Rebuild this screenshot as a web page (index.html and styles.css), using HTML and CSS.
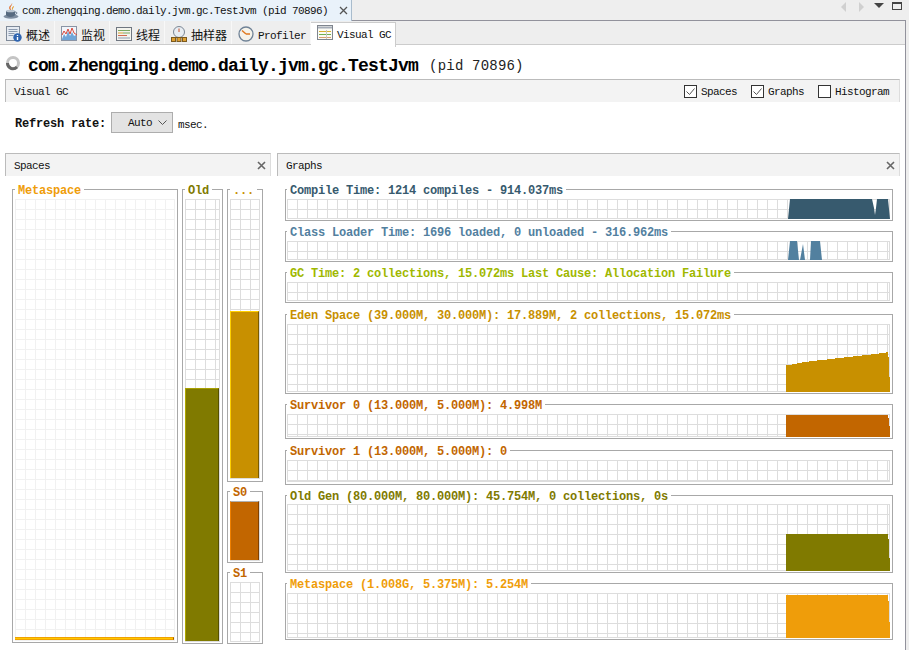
FILE: index.html
```html
<!DOCTYPE html>
<html lang="zh-CN">
<head>
    <meta charset="UTF-8">
    <title>VisualVM - Visual GC</title>
    <link rel="stylesheet" href="styles.css">
</head>
<body>

<div class="doc-bar">
    <div class="doc-tab">
        <svg class="doc-icon" width="16" height="16" viewBox="0 0 16 16">
            <path d="M9 0c1 2-2 3-1.500 5.500.2 1 1 1.500 1 2.500-1.500-1-3-2.500-2-4.500C7 2.500 9 2 9 0z" fill="#e0641c"/>
            <path d="M11 3c0 2-2 2-1 5-1.500-1-1.500-3.500 0-4.500z" fill="#e8a030"/>
            <ellipse cx="8" cy="13.500" rx="7.500" ry="2.200" fill="#7d8da0"/>
            <path d="M3 8h9v3.500c0 1.500-2 2.500-4.500 2.500S3 13 3 11.500z" fill="#566a80"/>
            <ellipse cx="7.500" cy="8" rx="4.500" ry="1.300" fill="#b8c4d0"/>
            <path d="M12 9c2.500-.5 2.500 2.500-.5 2.500" fill="none" stroke="#566a80"/>
        </svg>
        <span class="doc-name">com.zhengqing.demo.daily.jvm.gc.TestJvm (pid 70896)</span>
        <svg class="doc-close" width="9" height="9" viewBox="0 0 9 9"><path d="M1 1l7 7M8 1l-7 7" stroke="#555" stroke-width="1.300"/></svg>
    </div>
    <svg class="doc-nav" width="64" height="12" viewBox="0 0 64 12">
        <path d="M6 1v10L1 6z" fill="#d0d0d0"/>
        <path d="M19 1v10l5-5z" fill="#d0d0d0"/>
        <path d="M34 2h10l-5 5z" fill="#444"/>
        <rect x="52.500" y="1.500" width="9" height="7" fill="none" stroke="#444"/>
        <path d="M52 2h10" stroke="#444" stroke-width="2"/>
    </svg>
</div>

<div class="window">
    <div class="view-tabs">
        <div class="view-tab">
            <svg width="16" height="16" viewBox="0 0 16 16">
                <rect x=".5" y=".5" width="13" height="14" fill="#e6ebf2" stroke="#7f8a99"/>
                <path d="M2.500 3.500h9M2.500 5.500h9M2.500 7.500h6M2.500 9.500h5" stroke="#8c9bb0"/>
                <circle cx="11.500" cy="11.500" r="4.200" fill="#2f64b0"/>
                <path d="M11.500 9v1M11.500 11v3" stroke="#fff" stroke-width="1.400"/>
            </svg>
            <span class="tab-cjk">概述</span>
        </div>
        <div class="view-tab">
            <svg width="16" height="16" viewBox="0 0 16 16">
                <rect x=".5" y=".5" width="15" height="14" fill="#f2f5fa" stroke="#8a94a5"/>
                <path d="M1 13l2-5 2 3 2-6 2 5 2-4 2 4 2-1v5H1z" fill="#6fa5d8"/>
                <path d="M1 9l2-4 2 3 2-5 2 5 2-6 2 5 3 2" fill="none" stroke="#d8483c"/>
            </svg>
            <span class="tab-cjk">监视</span>
        </div>
        <div class="view-tab">
            <svg width="16" height="16" viewBox="0 0 16 16">
                <rect x=".5" y="1.500" width="15" height="13" fill="#f4f4ee" stroke="#6f7680"/>
                <path d="M2 4.500h12" stroke="#7aa860"/>
                <path d="M2 7h5" stroke="#d8a030"/><path d="M7 7h7" stroke="#7aa860"/>
                <path d="M2 9.500h9" stroke="#d06a50"/>
                <path d="M2 12h12" stroke="#8c9bb0"/>
            </svg>
            <span class="tab-cjk">线程</span>
        </div>
        <div class="view-tab">
            <svg width="16" height="16" viewBox="0 0 16 16">
                <circle cx="8" cy="6" r="5.500" fill="#e8edf2" stroke="#7b8794"/>
                <path d="M8 6V2.500" stroke="#c8502c"/>
                <path d="M3 11.500h10" stroke="#7b5a20"/>
                <rect x=".5" y="11.500" width="4" height="4" fill="#e0a030" stroke="#7b5a20"/>
                <rect x="6" y="11.500" width="4" height="4" fill="#e0a030" stroke="#7b5a20"/>
                <rect x="11.500" y="11.500" width="4" height="4" fill="#e0a030" stroke="#7b5a20"/>
            </svg>
            <span class="tab-cjk">抽样器</span>
        </div>
        <div class="view-tab">
            <svg width="16" height="16" viewBox="0 0 16 16">
                <circle cx="8" cy="8" r="7" fill="#f6f3ea" stroke="#6f8296" stroke-width="1.300"/>
                <path d="M8 8L4 4.500M8 8h4" stroke="#e07a20" stroke-width="1.500"/>
            </svg>
            <span class="tab-label">Profiler</span>
        </div>
        <div class="view-tab view-tab-active">
            <svg width="16" height="16" viewBox="0 0 16 16">
                <rect x=".5" y=".5" width="15" height="14" fill="#fbfbf4" stroke="#7f858e"/>
                <path d="M1 2.500h14" stroke="#a6adb8" stroke-width="2"/>
                <path d="M2 6.500h12" stroke="#d8b030"/>
                <path d="M2 9.500h12" stroke="#70b050"/>
                <path d="M2 12.500h12" stroke="#d8a070"/>
                <path d="M9.500 5v9" stroke="#c8c8c0"/>
            </svg>
            <span class="tab-label">Visual GC</span>
        </div>
    </div>

    <div class="app-title">
        <svg class="spinner" width="16" height="16" viewBox="0 0 16 16">
            <circle cx="8" cy="8" r="5.500" fill="none" stroke="#c4c4c4" stroke-width="3"/>
            <path d="M2.500 8a5.500 5.500 0 0 0 9.500 4" fill="none" stroke="#666" stroke-width="3"/>
        </svg>
        <span class="app-name">com.zhengqing.demo.daily.jvm.gc.TestJvm</span>
        <span class="app-pid">(pid 70896)</span>
    </div>

    <div class="section-bar">
        <span class="tab-label">Visual GC</span>
        <div class="options">
            <label class="option">
                <span class="check"><svg width="11" height="11" viewBox="0 0 11 11"><path d="M1.500 5.500l3 3 5-6" fill="none" stroke="#555"/></svg></span>
                <span class="tab-label">Spaces</span>
            </label>
            <label class="option">
                <span class="check"><svg width="11" height="11" viewBox="0 0 11 11"><path d="M1.500 5.500l3 3 5-6" fill="none" stroke="#555"/></svg></span>
                <span class="tab-label">Graphs</span>
            </label>
            <label class="option">
                <span class="check"></span>
                <span class="tab-label">Histogram</span>
            </label>
        </div>
    </div>

    <div class="refresh">
        <span class="refresh-label">Refresh rate:</span>
        <div class="combo">
            <span class="tab-label">Auto</span>
            <svg width="9" height="5" viewBox="0 0 9 5"><path d="M.5 .5l4 4 4-4" fill="none" stroke="#555"/></svg>
        </div>
        <span class="tab-label">msec.</span>
    </div>

    <div class="panels">
        <div class="panel panel-spaces">
            <div class="panel-head">
                <span class="tab-label">Spaces</span>
                <svg width="9" height="9" viewBox="0 0 9 9"><path d="M1 1l7 7M8 1l-7 7" stroke="#666" stroke-width="1.600"/></svg>
            </div>
            <div class="spaces">
                <fieldset class="box meta">
                    <legend>Metaspace</legend>
                    <div class="plot plot-light plot-meta"><div class="fill" style="height:3px"></div></div>
                </fieldset>
                <fieldset class="box old">
                    <legend>Old</legend>
                    <div class="plot plot-old"><div class="fill" style="height:253px"></div></div>
                </fieldset>
                <div class="space-col">
                    <fieldset class="box eden">
                        <legend>...</legend>
                        <div class="plot plot-eden"><div class="fill" style="height:167px"></div></div>
                    </fieldset>
                    <fieldset class="box surv">
                        <legend>S0</legend>
                        <div class="plot plot-s"><div class="fill" style="height:59px"></div></div>
                    </fieldset>
                    <fieldset class="box surv">
                        <legend>S1</legend>
                        <div class="plot plot-s"></div>
                    </fieldset>
                </div>
            </div>
        </div>

        <div class="panel panel-graphs">
            <div class="panel-head">
                <span class="tab-label">Graphs</span>
                <svg width="9" height="9" viewBox="0 0 9 9"><path d="M1 1l7 7M8 1l-7 7" stroke="#666" stroke-width="1.600"/></svg>
            </div>
            <div class="graphs">
                <fieldset class="box graph compile">
                    <legend>Compile Time: 1214 compiles - 914.037ms</legend>
                    <div class="plot h-20">
                        <svg class="chart" width="603" height="20"><path d="M501 20L503 0H585L587 9 588 16 589 9 590 0H601L603 20z"/></svg>
                    </div>
                </fieldset>
                <fieldset class="box graph loader">
                    <legend>Class Loader Time: 1696 loaded, 0 unloaded - 316.962ms</legend>
                    <div class="plot h-19">
                        <svg class="chart" width="603" height="19"><path d="M501 19L503 0H510L512 19zM513 19L516 3 518 19zM523 19L524 0H533L535 19z"/></svg>
                    </div>
                </fieldset>
                <fieldset class="box graph gctime">
                    <legend>GC Time: 2 collections, 15.072ms Last Cause: Allocation Failure</legend>
                    <div class="plot h-19"></div>
                </fieldset>
                <fieldset class="box graph eden">
                    <legend>Eden Space (39.000M, 30.000M): 17.889M, 2 collections, 15.072ms</legend>
                    <div class="plot h-68">
                        <svg class="chart" width="603" height="68"><path d="M499 68V41H505V40H510V39H515V38H522V37H530V36H540V35H548V34H557V33H566V32H575V31H584V30H592V29H599V28H601V33H602V53H603V68z"/></svg>
                    </div>
                </fieldset>
                <fieldset class="box graph surv s0">
                    <legend>Survivor 0 (13.000M, 5.000M): 4.998M</legend>
                    <div class="plot h-23">
                        <svg class="chart" width="603" height="23"><path d="M499 23V1H601V4H602V12H603V23z"/></svg>
                    </div>
                </fieldset>
                <fieldset class="box graph surv s1">
                    <legend>Survivor 1 (13.000M, 5.000M): 0</legend>
                    <div class="plot h-22"></div>
                </fieldset>
                <fieldset class="box graph old">
                    <legend>Old Gen (80.000M, 80.000M): 45.754M, 0 collections, 0s</legend>
                    <div class="plot h-67">
                        <svg class="chart" width="603" height="67"><path d="M499 67V30H601V35H602V54H603V67z"/></svg>
                    </div>
                </fieldset>
                <fieldset class="box graph meta">
                    <legend>Metaspace (1.008G, 5.375M): 5.254M</legend>
                    <div class="plot h-45">
                        <svg class="chart" width="603" height="45"><path d="M499 45V2H601V8H602V29H603V45z"/></svg>
                    </div>
                </fieldset>
            </div>
        </div>
    </div>
</div>

</body>
</html>
```

FILE: styles.css
```css
* {
    box-sizing: border-box;
}

html, body {
    margin: 0;
    height: 650px;
    overflow: hidden;
    background: #eee;
}

body {
    width: 909px;
    font-family: "Liberation Mono", monospace;
    font-size: 11px;
    letter-spacing: -0.6px;
    color: #111;
}

svg {
    display: block;
    flex: none;
}

/* top document tab */
.doc-bar {
    height: 20px;
    display: flex;
    justify-content: space-between;
    background: #eee;
}

.doc-tab {
    width: 352px;
    height: 21px;
    padding-left: 3px;
    display: flex;
    align-items: center;
    background: #e9f2fa;
    border-right: 1px solid #a9bccd;
    position: relative;
    z-index: 1;
}

.doc-name {
    margin-left: 3px;
    width: 305px;
    white-space: nowrap;
}

.doc-close {
    margin-left: 12px;
}

.doc-nav {
    margin: 1px 5px 0 0;
}

.window {
    width: 906px;
    height: 630px;
    background: #fff;
    border-top: 1px solid #92929c;
    border-right: 1px solid #92929c;
    overflow: hidden;
}

/* view tabs */
.view-tabs {
    height: 24px;
    display: flex;
    background: #eee;
    border-bottom: 1px solid #ccc;
}

.view-tab {
    height: 23px;
    padding: 5px 4px 0 6px;
    display: flex;
    gap: 4px;
    border-right: 1px solid #f8f8f8;
}

.view-tab-active {
    height: 25px;
    margin-top: 1px;
    padding: 2px 4px 0 6px;
    background: #fff;
    border: 1px solid #ccc;
    border-bottom: 0;
    border-left: 0;
    margin-bottom: -1px;
}

.tab-cjk {
    font-family: "Noto Sans CJK SC", sans-serif;
    font-size: 12px;
    line-height: 18px;
    letter-spacing: 0;
}

.tab-label {
    padding-top: 2px;
    line-height: 13px;
    white-space: nowrap;
}

.view-tab .tab-label {
    padding-top: 1px;
    line-height: 18px;
}

/* application title */
.app-title {
    height: 34px;
    padding: 7px 0 0 5px;
    display: flex;
    align-items: center;
    gap: 7px;
}

.spinner {
    margin-bottom: 5px;
}

.app-name {
    font-size: 18px;
    font-weight: bold;
    letter-spacing: -0.8px;
    color: #000;
}

.app-pid {
    margin-left: 4px;
    font-size: 14px;
    letter-spacing: 0.2px;
    color: #222;
}

.section-bar {
    height: 23px;
    margin: 0 5px;
    padding: 1px 10px 0 8px;
    display: flex;
    align-items: center;
    justify-content: space-between;
    background: #f3f3f3;
    border-top: 1px solid #bbb;
    border-left: 1px solid #bbb;
    border-right: 1px solid #ddd;
}

.options {
    display: flex;
    gap: 14px;
}

.option {
    display: flex;
    align-items: center;
    gap: 4px;
}

.check {
    width: 13px;
    height: 13px;
    background: #fff;
    border: 1px solid #333;
}

.refresh {
    height: 51px;
    padding: 10px 0 0 15px;
    display: flex;
    align-items: flex-start;
}

.refresh-label {
    margin-right: 5px;
    font-size: 12px;
    font-weight: bold;
    line-height: 25px;
    letter-spacing: -0.2px;
}

.refresh > .tab-label {
    line-height: 23px;
}

.combo {
    width: 62px;
    height: 21px;
    margin-right: 5px;
    padding: 0 5px 0 16px;
    display: flex;
    align-items: center;
    justify-content: space-between;
    background: #e3e3e3;
    border: 1px solid #adadad;
}

/* panels */
.panels {
    padding: 0 5px;
    display: flex;
    gap: 6px;
}

.panel-spaces {
    width: 266px;
}

.panel-graphs {
    width: 623px;
}

.panel-head {
    height: 23px;
    padding: 1px 4px 0 8px;
    display: flex;
    align-items: center;
    justify-content: space-between;
    background: #f3f3f3;
    border-top: 1px solid #bbb;
    border-left: 1px solid #bbb;
    border-right: 1px solid #ddd;
}

.box {
    min-width: 0;
    margin: 0;
    padding: 4px 2px 1px;
    border: 1px solid #a8a8a8;
}

.box legend {
    height: 11px;
    margin-left: 1px;
    padding: 0 3px;
    font-size: 12px;
    font-weight: bold;
    line-height: 15px;
    letter-spacing: -0.2px;
    white-space: nowrap;
}

.meta legend, .meta .chart { color: #ef9d0a; fill: #ef9d0a; }
.old legend, .old .chart { color: #807a00; fill: #807a00; }
.eden legend, .eden .chart { color: #c89000; fill: #c89000; }
.surv legend, .surv .chart { color: #c26600; fill: #c26600; }
.compile legend, .compile .chart { color: #375a6e; fill: #375a6e; }
.loader legend, .loader .chart { color: #52809f; fill: #52809f; }
.gctime legend { color: #9fb800; }

.plot {
    position: relative;
    display: flex;
    align-items: flex-end;
    background-image:
        linear-gradient(to right, #ddd 1px, transparent 1px),
        linear-gradient(to bottom, #ddd 1px, transparent 1px);
    background-size: 10px 10px;
    border-right: 1px solid #ddd;
    border-bottom: 1px solid #ddd;
}

.plot-light {
    background-image:
        linear-gradient(to right, #f1f1f1 1px, transparent 1px),
        linear-gradient(to bottom, #f1f1f1 1px, transparent 1px);
    border-color: #f1f1f1;
}

.chart {
    position: absolute;
    left: 0;
    top: 0;
    overflow: visible;
}

/* spaces panel */
.spaces {
    height: 474px;
    padding: 8px 0 0 7px;
    display: flex;
    align-items: flex-start;
    gap: 4px;
    background: #fff;
}

.space-col {
    display: flex;
    flex-direction: column;
    gap: 4px;
}

.spaces .box legend {
    margin-left: 0;
}

.fill {
    width: 100%;
    background: #c89000;
    border-top: 1px solid #ffd000;
    border-left: 1px solid #ffd000;
    border-right: 1px solid #7a5a00;
}

.meta.box {
    width: 166px;
}

.plot-meta {
    height: 442px;
}

.plot-meta .fill {
    background: #ffc800;
    border-top: 1px solid #f0a000;
    border-bottom: 1px solid #f0a000;
    border-left: 0;
    border-right: 1px solid #a05a00;
}

.old.box {
    width: 41px;
}

.plot-old {
    height: 443px;
}

.plot-old .fill {
    background: #807a00;
    border-top: 1px solid #a8a000;
    border-left: 1px solid #b0a800;
    border-right: 1px solid #555000;
}

.space-col .box {
    width: 36px;
}

.space-col .eden {
    padding-bottom: 2px;
}

.plot-eden {
    height: 280px;
}

.plot-s {
    height: 60px;
}

.plot-s .fill {
    background: #c26600;
    border-top: 1px solid #b0b0b0;
    border-left: 1px solid #f08000;
    border-right: 1px solid #804000;
}

/* graphs panel */
.graphs {
    padding: 8px 0 0 8px;
    display: flex;
    flex-direction: column;
    gap: 5px;
    background: #fff;
}

.graph.box {
    width: 608px;
    padding: 4px 2px 1px 1px;
}

.graph.box legend {
    margin-left: 0;
}

.graph.gctime, .graph.s0 {
    margin-bottom: 1px;
}

.graph.s1 {
    padding-bottom: 2px;
}

.graph.old {
    padding-top: 3px;
}

.h-19 { height: 19px; }
.h-20 { height: 20px; }
.h-22 { height: 22px; }
.h-23 { height: 23px; }
.h-45 { height: 45px; }
.h-67 { height: 67px; }
.h-68 { height: 68px; }
```
